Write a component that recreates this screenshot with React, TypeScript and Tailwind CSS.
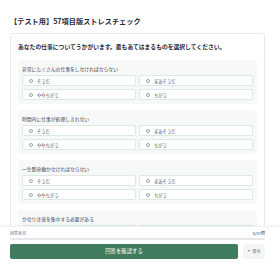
const questions = [
  "非常にたくさんの仕事をしなければならない",
  "時間内に仕事が処理しきれない",
  "一生懸命働かなければならない",
  "かなり注意を集中する必要がある",
];

const options = ["そうだ", "まあそうだ", "ややちがう", "ちがう"];

export default function App() {
  return (
    <div
      className="h-[280px] w-[280px] flex flex-col overflow-hidden bg-white text-[#1f2937]"
      style={{ fontFamily: '"Noto Sans CJK JP", "Noto Sans", sans-serif' }}
    >
      <div className="flex-1 overflow-hidden pl-[10px] pr-[15px] pt-[16px]">
        <h1 className="text-[7.2px] leading-[11px] font-bold text-[#1f2937]">
          【テスト用】57項目版ストレスチェック
        </h1>

        <div className="mt-[6px] border border-[#e5ece8] rounded-[3px] bg-white px-[7px] pt-[9px]">
          <h2 className="text-[5.8px] leading-[8px] font-bold text-[#1f2937]">
            あなたの仕事についてうかがいます。最もあてはまるものを選択してください。
          </h2>

          <div className="mt-[9px] flex flex-col gap-[6px]">
            {questions.map((q) => (
              <div key={q} className="bg-[#f7f8f8] rounded-[3px] px-[4px] pt-[5px] pb-[4px]">
                <p className="text-[4.8px] leading-[7px] text-[#374151]">{q}</p>
                <div className="mt-[3px] grid grid-cols-2 gap-[3px]">
                  {options.map((o) => (
                    <label
                      key={o}
                      className="h-[11px] flex items-center gap-[4px] pl-[6px] bg-white border border-[#dbeae2] rounded-[2px]"
                    >
                      <span className="w-[4px] h-[4px] rounded-full border-[0.6px] border-[#9ca3af] bg-white" />
                      <span className="text-[4.3px] leading-[6px] text-[#4b5563]">{o}</span>
                    </label>
                  ))}
                </div>
              </div>
            ))}
          </div>
        </div>
      </div>

      <div className="h-[54px] shrink-0 bg-white border-t border-[#eef1f0] pl-[10px] pr-[15px] pt-[3px] shadow-[0_-1px_3px_rgba(0,0,0,0.04)]">
        <div className="flex items-center justify-between text-[4px] leading-[6px] text-[#6b7280]">
          <span>回答状況</span>
          <span className="text-[#374151]">0/57問</span>
        </div>
        <div className="mt-[2px] h-[2px] rounded-full bg-[#e5e7eb]" />
        <div className="mt-[4px] flex items-center gap-[5px]">
          <button className="flex-1 h-[15px] rounded-[2px] bg-[#3f7b5c] text-white text-[5.4px] leading-[15px]">
            回答を確認する
          </button>
          <button className="w-[22px] h-[15px] rounded-[2px] bg-[#f3f6f4] text-[#4b5563] text-[4px] leading-[15px]">
            ← 戻る
          </button>
        </div>
      </div>
    </div>
  );
}
